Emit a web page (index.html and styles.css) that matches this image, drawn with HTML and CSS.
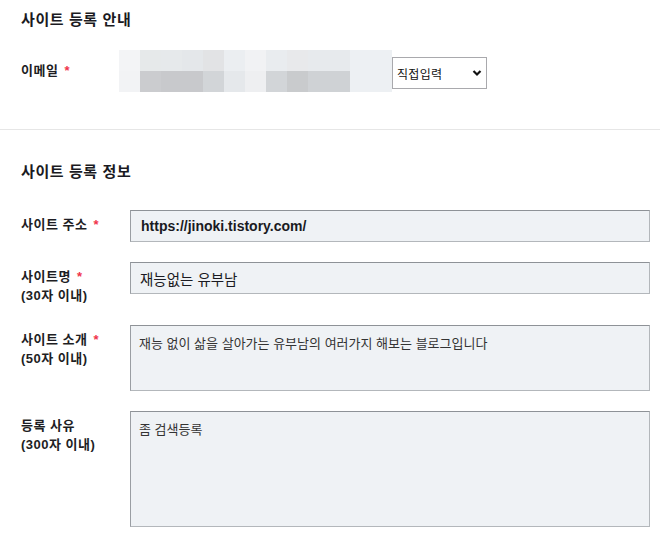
FILE: index.html
```html
<!DOCTYPE html>
<html lang="ko">
<head>
<meta charset="utf-8">
<title>사이트 등록</title>
<link rel="stylesheet" href="styles.css">
</head>
<body>
<div class="section guide">
  <h2 class="title">사이트 등록 안내</h2>
  <div class="email-row">
    <div class="email-label">이메일 <span class="req">*</span></div>
    <div class="blur">
      <div class="blur-top"></div>
      <div class="blur-bottom"></div>
    </div>
    <div class="select-wrap">
      <select class="select">
        <option>직접입력</option>
      </select>
      <svg class="chev" width="10" height="8" viewBox="0 0 10 8"><polyline points="1.5,2 5,5.5 8.5,2" fill="none" stroke="#111" stroke-width="2.2"/></svg>
    </div>
  </div>
</div>
<div class="section info">
  <h2 class="title">사이트 등록 정보</h2>
  <div class="row">
    <div class="label"><span>사이트 주소 <span class="req">*</span></span></div>
    <input class="field url" type="text" value="https://jinoki.tistory.com/">
  </div>
  <div class="row">
    <div class="label"><span>사이트명 <span class="req">*</span></span><span class="sub">(30자 이내)</span></div>
    <input class="field name" type="text" value="재능없는 유부남">
  </div>
  <div class="row">
    <div class="label"><span>사이트 소개 <span class="req">*</span></span><span class="sub">(50자 이내)</span></div>
    <textarea class="area short">재능 없이 삶을 살아가는 유부남의 여러가지 해보는 블로그입니다</textarea>
  </div>
  <div class="row">
    <div class="label"><span>등록 사유</span><span class="sub">(300자 이내)</span></div>
    <textarea class="area tall">좀 검색등록</textarea>
  </div>
</div>
</body>
</html>
```
FILE: styles.css
```css
html, body {
  margin: 0;
  padding: 0;
  background: #fff;
}
body {
  font-family: "Liberation Sans", "Noto Sans CJK KR", sans-serif;
  color: #1e1e24;
  width: 660px;
  overflow: hidden;
}
.section {
  padding-left: 21px;
}
.guide {
  padding-top: 10px;
  padding-bottom: 37px;
  border-bottom: 1px solid #e6e6e6;
}
.title {
  margin: 0;
  font-size: 15px;
  line-height: 20px;
  font-weight: 700;
  letter-spacing: 0.6px;
  color: #1a1a22;
}
.email-row {
  margin-top: 20px;
  display: flex;
  align-items: center;
}
.email-label {
  width: 98px;
  font-size: 13px;
  line-height: 20px;
  font-weight: 700;
  letter-spacing: 0.5px;
}
.req {
  color: #f0344a;
  font-weight: 700;
  margin-left: 2px;
}
.blur {
  width: 273px;
  display: flex;
  flex-direction: column;
}
.blur-top, .blur-bottom {
  height: 21px;
}
.blur-top {
  background: linear-gradient(to right,
    #f3f4f6 0 21px, #e6e9ea 21px 42px, #e6e9eb 42px 63px, #e4e7ea 63px 84px,
    #e2e3e5 84px 105px, #ebeef1 105px 126px, #f1f2f4 126px 147px, #e9ecef 147px 168px,
    #e8e9eb 168px 189px, #e7eaed 189px 231px, #edf0f3 231px 273px);
}
.blur-bottom {
  background: linear-gradient(to right,
    #f2f3f5 0 21px, #cbcccf 21px 42px, #c8c9cc 42px 84px,
    #d2d5d8 84px 105px, #e5e8eb 105px 126px, #eeeff1 126px 147px, #d2d5d8 147px 168px,
    #c9cbcd 168px 189px, #cfd2d5 189px 231px, #edf0f3 231px 273px);
}
.select-wrap {
  position: relative;
  margin-top: 4px;
}
.select {
  appearance: none;
  -webkit-appearance: none;
  width: 95px;
  height: 32px;
  box-sizing: border-box;
  border: 1px solid #a9a9ad;
  border-radius: 0;
  background: #fff;
  padding: 0 0 0 4px;
  font-family: "Noto Sans CJK KR", sans-serif;
  font-size: 12px;
  letter-spacing: 0.3px;
  color: #111;
  margin: 0;
  display: block;
}
.chev {
  position: absolute;
  left: 80px;
  top: 12px;
  pointer-events: none;
}
.info {
  padding-top: 32px;
}
.info .title {
  margin-bottom: 28px;
}
.row {
  display: flex;
  align-items: flex-start;
  margin-bottom: 20px;
}
.label {
  width: 109px;
  flex: none;
  padding-top: 5px;
  font-size: 13px;
  line-height: 20px;
  font-weight: 700;
  letter-spacing: 0.5px;
  display: flex;
  flex-direction: column;
}
.label .sub {
  line-height: 18px;
}
.field, .area {
  box-sizing: border-box;
  width: 520px;
  margin: 0;
  border: 1px solid;
  border-color: #8e9297 #b3b7bb #b3b7bb #9a9ea3;
  border-radius: 0;
  background: #eff2f5;
  outline: none;
}
.field {
  height: 32px;
  padding: 0 9px;
  color: #1a1a22;
}
.url {
  font-family: "Liberation Sans", sans-serif;
  font-size: 14px;
  font-weight: 700;
  padding-left: 10px;
}
.name {
  font-family: "Noto Sans CJK KR", sans-serif;
  font-size: 14.5px;
}
.area {
  resize: none;
  padding: 8px 8px;
  font-family: "Noto Sans CJK KR", sans-serif;
  font-size: 13px;
  line-height: 18px;
  color: #333;
  display: block;
}
.short {
  height: 66px;
}
.tall {
  height: 116px;
}
```
